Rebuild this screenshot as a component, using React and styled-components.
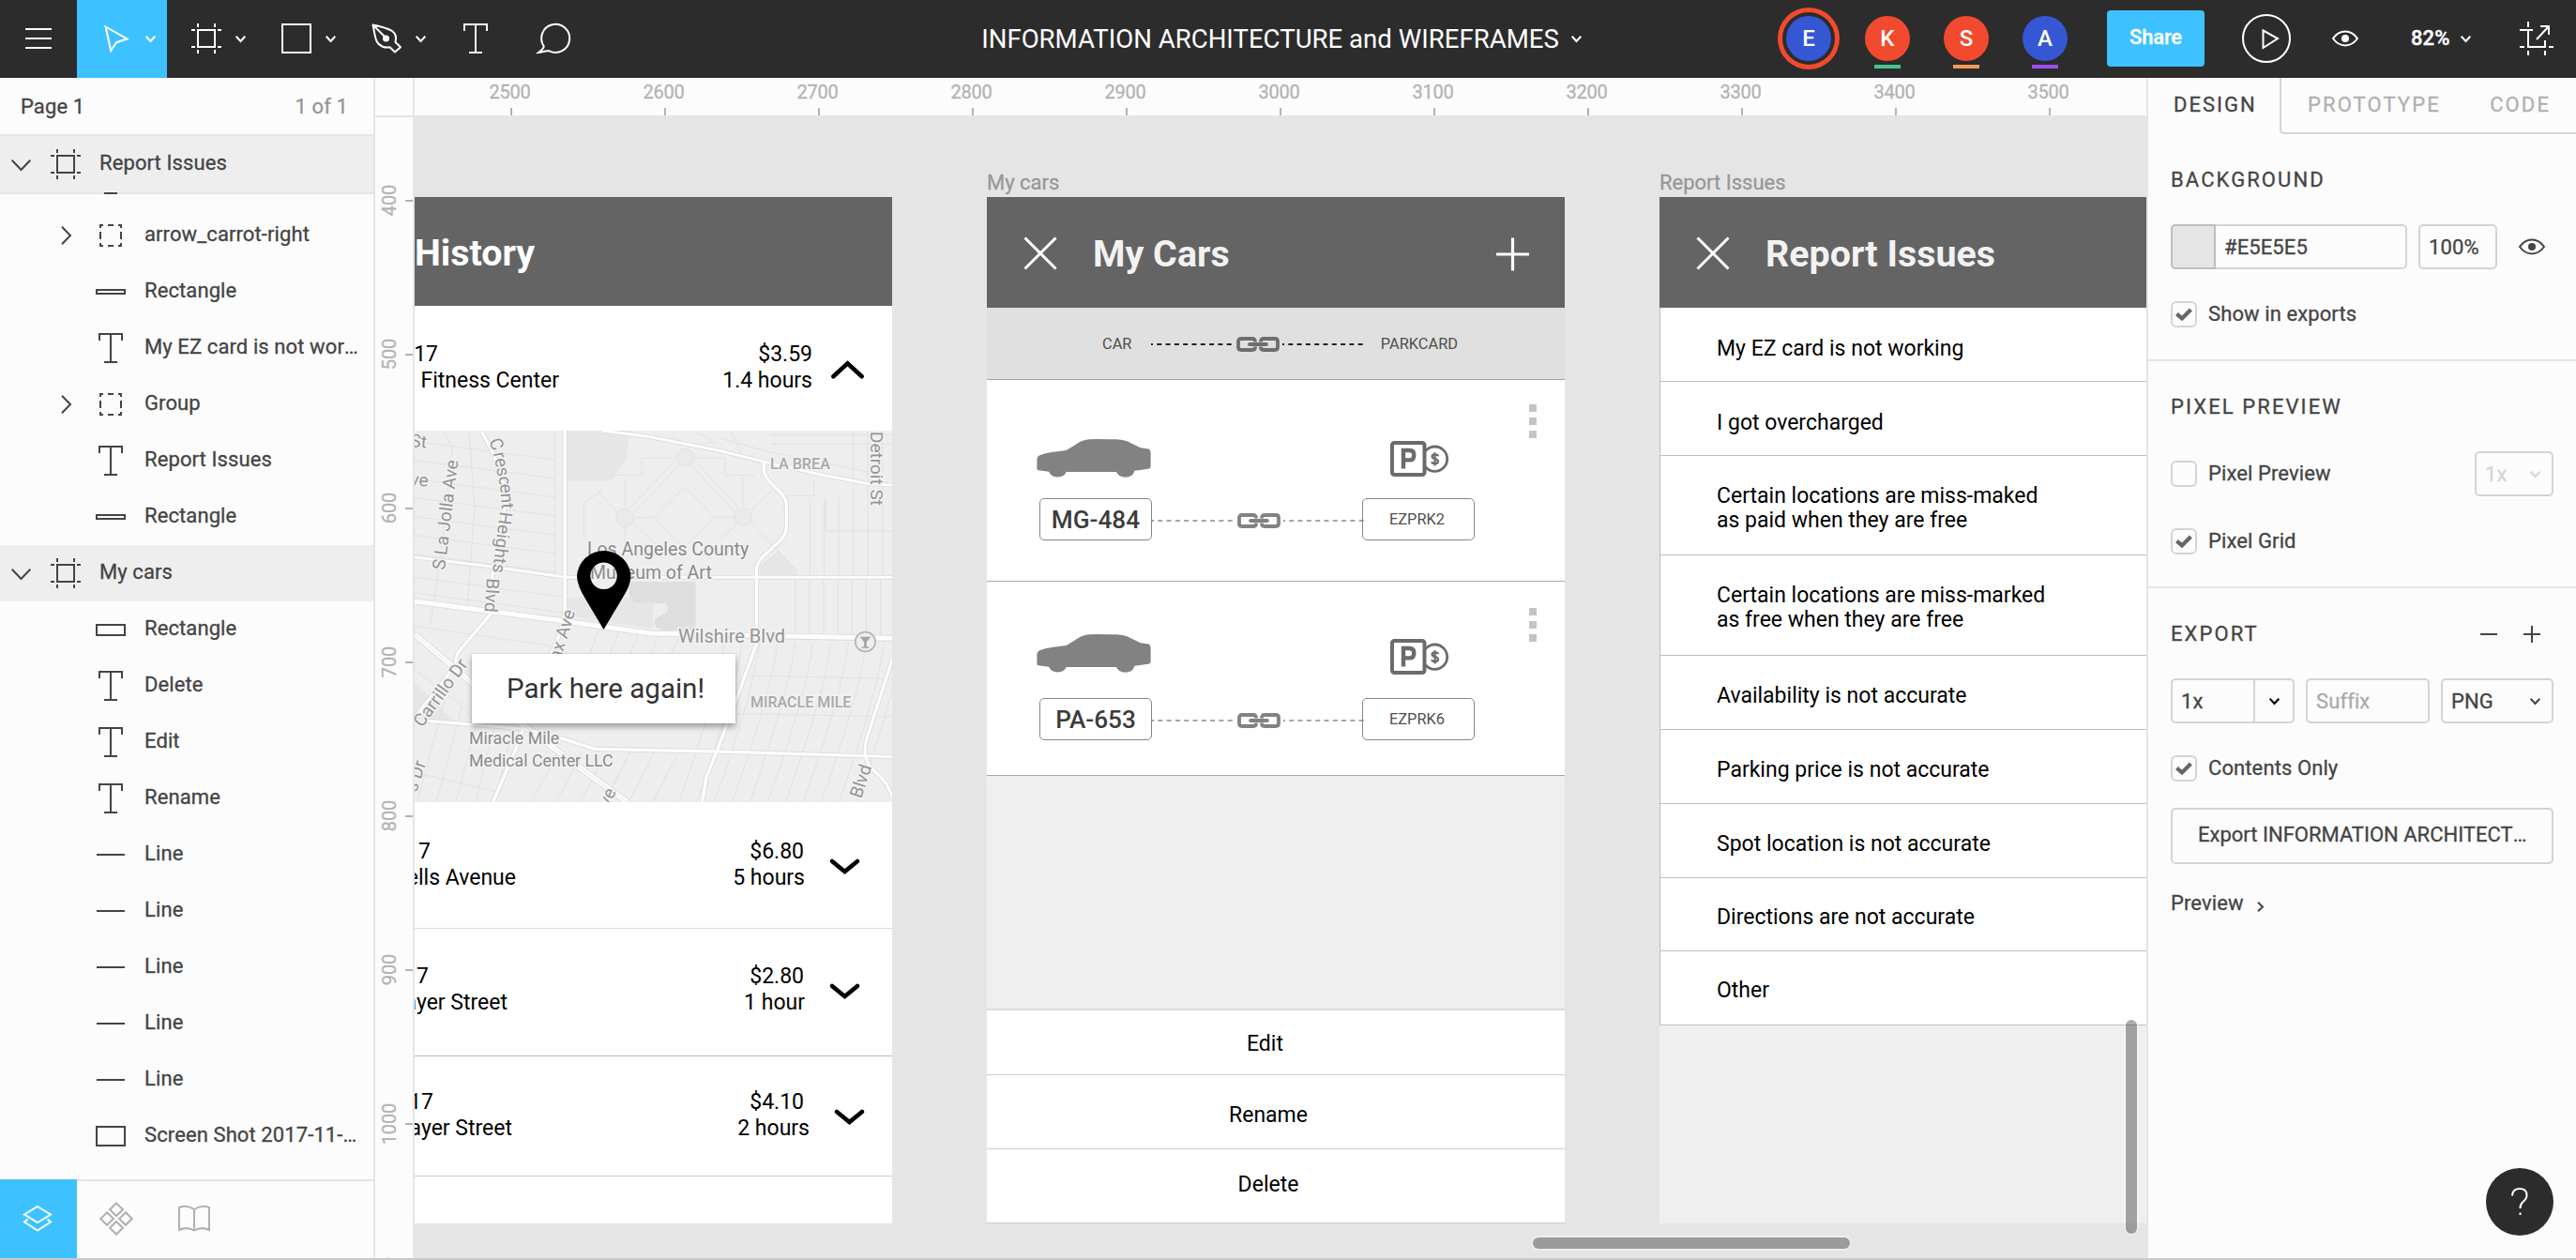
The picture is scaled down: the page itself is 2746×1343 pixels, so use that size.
import React from "react";
import styled, { createGlobalStyle } from "styled-components";

const ink = "#444444";
const line = "#e5e5e5";
const blue = "#3dc2ff";

const Global = createGlobalStyle`
  *, *::before, *::after { box-sizing: border-box; }
  body { margin: 0; font-family: Roboto, "Noto Sans", sans-serif; background: #fcfcfc; }
  svg { display: block; flex: none; overflow: visible; }
`;

const Screen = styled.div`
  width: 2746px;
  height: 1343px;
  display: flex;
  flex-direction: column;
  overflow: hidden;
  color: ${ink};
  font-size: 22px;
  line-height: 24px;
  letter-spacing: 0.1px;
`;
const BottomEdge = styled.div`
  height: 2px;
  flex: none;
  background: #c9c9c9;
`;
const Body = styled.div`
  flex: 1;
  min-height: 0;
  display: flex;
`;

/* ---------- toolbar ---------- */
const Toolbar = styled.header`
  height: 83px;
  flex: none;
  background: #2c2c2c;
  color: #fff;
  display: grid;
  grid-template-columns: 1fr auto 1fr;
`;
const ToolGroup = styled.div`
  display: flex;
`;
const Tool = styled.button`
  width: ${(p) => (p.$single ? 82 : 96)}px;
  height: 83px;
  border: 0;
  padding: ${(p) => (p.$single ? "0 1px 1px 0" : "0 0 1px 26px")};
  background: ${(p) => (p.$active ? blue : "transparent")};
  color: #fff;
  display: flex;
  align-items: center;
  justify-content: ${(p) => (p.$single ? "center" : "flex-start")};
  gap: 15px;
`;
const FileTitle = styled.div`
  display: flex;
  align-items: center;
  gap: 13px;
  padding: 0 14px 0 0;
  font-size: 27.6px;
  letter-spacing: 0;
  white-space: nowrap;
`;
const Actions = styled.div`
  display: flex;
  align-items: center;
  justify-content: flex-end;
  padding: 0 24px 1px 0;
`;
const Avatars = styled.div`
  display: flex;
  gap: 36px;
`;
const Avatar = styled.div`
  position: relative;
  width: 48px;
  height: 48px;
  border-radius: 50%;
  background: ${(p) => p.$color};
  box-shadow: ${(p) => (p.$ring ? `0 0 0 4px #2c2c2c, 0 0 0 9px ${p.$ring}` : "none")};
  display: flex;
  align-items: center;
  justify-content: center;
  font-size: 24px;
  font-weight: 500;
  &::after {
    content: "";
    position: absolute;
    left: 10px;
    bottom: -8px;
    width: 28px;
    height: 4px;
    background: ${(p) => p.$mark || "transparent"};
  }
`;
const Share = styled.button`
  width: 104px;
  height: 60px;
  margin: 0 40px 0 42px;
  padding: 0 0 3px;
  border: 0;
  border-radius: 4px;
  background: ${blue};
  color: #fff;
  font: 500 22px Roboto, sans-serif;
  letter-spacing: -0.2px;
  -webkit-text-stroke: 0.3px;
`;
const Zoom = styled.div`
  width: 64px;
  margin: 0 52px 0 56px;
  display: flex;
  align-items: center;
  justify-content: space-between;
  font-weight: 500;
  font-size: 22px;
  -webkit-text-stroke: 0.4px;
`;
const EyeSlot = styled.div`
  margin-left: 44px;
`;

/* ---------- layers ---------- */
const Sidebar = styled.aside`
  width: 400px;
  flex: none;
  border-right: 2px solid ${line};
  background: #fcfcfc;
  display: flex;
  flex-direction: column;
  -webkit-text-stroke: 0.3px;
`;
const PageBar = styled.div`
  height: 62px;
  flex: none;
  border-bottom: 2px solid ${line};
  padding: 1px 27px 0 22px;
  display: flex;
  align-items: center;
  justify-content: space-between;
`;
const Muted = styled.span`
  color: #969696;
`;
const LayerRow = styled.div`
  height: 60px;
  flex: none;
  padding: 0 12px 3px 0;
  display: grid;
  grid-template-columns: ${(p) => (p.$top ? "54px 32px 1fr" : "102px 32px 1fr")};
  align-items: center;
  background: ${(p) => (p.$top ? "#eeeeee" : "transparent")};
`;
const LayerName = styled.span`
  padding-left: 20px;
  overflow: hidden;
  white-space: nowrap;
  text-overflow: ellipsis;
`;
const Toggle = styled.span`
  padding: ${(p) => (p.$top ? "4px 0 0 12px" : "3px 0 0 65px")};
`;
const LayerIcon = styled.span`
  display: flex;
  justify-content: center;
  padding-top: 3px;
`;
const LayerList = styled.div`
  flex: 1;
  min-height: 0;
  overflow: hidden;
  display: flex;
  flex-direction: column;
`;
const ListRule = styled.div`
  height: 2px;
  flex: none;
  margin-bottom: -46px;
  background: ${line};
`;
const SideTabs = styled.div`
  height: 84px;
  flex: none;
  border-top: 2px solid ${line};
  display: flex;
`;
const SideTab = styled.div`
  width: 82px;
  height: 84px;
  margin-top: -2px;
  padding: ${(p) => p.$pad || 0};
  display: flex;
  align-items: center;
  justify-content: center;
  background: ${(p) => (p.$active ? blue : "transparent")};
  color: ${(p) => (p.$active ? "#fff" : "#b0b0b0")};
`;

/* ---------- canvas ---------- */
const Canvas = styled.main`
  width: 1888px;
  flex: none;
  display: grid;
  grid-template-columns: 42px 1fr;
  grid-template-rows: 40px 1fr;
  overflow: hidden;
  background: #e5e5e5;
`;
const Corner = styled.div`
  background: #fcfcfc;
  border-right: 2px solid ${line};
`;
const TopRuler = styled.div`
  background: #fcfcfc;
  padding-left: 21px;
  display: flex;
  overflow: hidden;
`;
const TopMark = styled.div`
  width: 164px;
  flex: none;
  display: flex;
  flex-direction: column;
  align-items: center;
  justify-content: space-between;
  padding-top: 3px;
  font-size: 20px;
  line-height: 24px;
  letter-spacing: -0.2px;
  color: #b3b3b3;
  -webkit-text-stroke: 0.3px;
  span {
    margin-right: 3px;
  }
  &::after {
    content: "";
    width: 2px;
    height: 8px;
    background: #b3b3b3;
  }
`;
const LeftRuler = styled.div`
  width: 40px;
  background: #fcfcfc;
  border-top: 2px solid ${line};
  padding-top: 7px;
  overflow: hidden;
  min-height: 0;
`;
const LeftMark = styled.div`
  height: 164px;
  display: flex;
  align-items: center;
  justify-content: space-between;
  padding-left: 3px;
  font-size: 20px;
  line-height: 24px;
  letter-spacing: -0.2px;
  color: #b3b3b3;
  -webkit-text-stroke: 0.3px;
  span {
    writing-mode: vertical-rl;
    transform: rotate(180deg);
  }
  &::after {
    content: "";
    width: 8px;
    height: 2px;
    background: #b3b3b3;
  }
`;
const Stage = styled.div`
  position: relative;
  overflow: hidden;
  min-height: 0;
  font-size: 23px;
  line-height: 28px;
  letter-spacing: 0;
  color: #000;
`;
const Artboard = styled.section`
  position: absolute;
  left: ${(p) => p.$x}px;
  top: 55px;
  width: ${(p) => p.$w}px;
`;
const ArtLabel = styled.div`
  height: 32px;
  padding-top: 5px;
  font-size: 22px;
  line-height: 24px;
  color: #979797;
  -webkit-text-stroke: 0.3px;
`;
const ArtBody = styled.div`
  height: 1094px;
  background: ${(p) => p.$bg || "#efefef"};
  display: flex;
  flex-direction: column;
`;
const ArtHeader = styled.div`
  height: ${(p) => p.$h || 118}px;
  flex: none;
  background: #646464;
  padding: 0 38px 0 ${(p) => p.$pad}px;
  display: flex;
  align-items: center;
  color: #f2f2f2;
  font-size: 39.4px;
  line-height: 46px;
  font-weight: 700;
`;
const ArtTitle = styled.div`
  flex: 1;
  padding: 4px 0 0 ${(p) => p.$gap}px;
  color: ${(p) => p.$color || "#f2f2f2"};
  white-space: nowrap;
`;

const Trip = styled.div`
  height: ${(p) => p.$h}px;
  flex: none;
  padding-top: ${(p) => p.$pt}px;
  border-bottom: ${(p) => (p.$rule ? `1px solid ${p.$rule}` : "0")};
  background: #fff;
  display: flex;
`;
const TripColumn = styled.div`
  width: ${(p) => p.$w}px;
  flex: none;
`;
const TripLine = styled.div`
  width: ${(p) => p.$end}px;
  height: 28px;
  display: flex;
  justify-content: flex-end;
  white-space: nowrap;
  span { flex: none; }
`;
const TripArrow = styled.div`
  padding: ${(p) => p.$top}px 0 0 ${(p) => p.$left}px;
`;
const MapBox = styled.div`
  position: relative;
  height: 396px;
  flex: none;
  overflow: hidden;
  background: #eee;
`;
const ParkButton = styled.button`
  position: absolute;
  left: 61px;
  top: 238px;
  width: 281px;
  height: 74px;
  border: 0;
  background: #fff;
  box-shadow: 0 4px 6px rgba(0, 0, 0, 0.32), 0 0 2px rgba(0, 0, 0, 0.15);
  font: 400 29.5px Roboto, sans-serif;
  color: #333;
  padding: 0 0 1px 4px;
`;

const LinkHeader = styled.div`
  height: 77px;
  flex: none;
  background: #e0e0e0;
  border-bottom: 1px solid #a3a3a3;
  padding: 2px 114px 0 123px;
  display: flex;
  align-items: center;
  font-size: 16.4px;
  color: #4f4f4f;
`;
const LinkSpan = styled.div`
  display: flex;
  align-items: center;
  justify-content: space-between;
  width: 227px;
  margin: ${(p) => p.$m || 0};
`;
const CarRow = styled.div`
  height: ${(p) => p.$h}px;
  flex: none;
  background: #fff;
  border-bottom: 1px solid #a9a9a9;
  padding: ${(p) => p.$pt}px 30px 0 53px;
  display: flex;
  justify-content: space-between;
`;
const CarMain = styled.div`
  display: flex;
  flex-direction: column;
  gap: ${(p) => p.$gap}px;
`;
const CarTop = styled.div`
  width: 467px;
  height: 41px;
  display: flex;
  justify-content: space-between;
  padding-right: 27px;
`;
const CardSlot = styled.div`
  padding-top: ${(p) => p.$top}px;
`;
const CarBottom = styled.div`
  padding-left: 3px;
  display: flex;
  align-items: center;
`;
const Plate = styled.div`
  width: 120px;
  height: 45px;
  border: 1.5px solid #868686;
  border-radius: 5px;
  display: flex;
  align-items: center;
  justify-content: center;
  padding-right: ${(p) => (p.$small ? 3 : 0)}px;
  font-size: ${(p) => (p.$small ? 16.4 : 26.2)}px;
  font-weight: ${(p) => (p.$small ? 400 : 500)};
  color: ${(p) => (p.$small ? "#4f4f4f" : "#3c3c3c")};
`;
const Dots = styled.div`
  margin-top: ${(p) => p.$top}px;
  display: flex;
  flex-direction: column;
  gap: 6px;
  i {
    width: 8px;
    height: 8px;
    background: #c4c4c4;
  }
`;
const Filler = styled.div`
  flex: 1;
`;
const MenuRow = styled.div`
  height: ${(p) => p.$h}px;
  flex: none;
  background: #fff;
  border-top: ${(p) => (p.$first ? "2px solid #dcdcdc" : "0")};
  border-bottom: 1px solid #cccccc;
  padding: ${(p) => p.$pad};
  display: flex;
  align-items: center;
  justify-content: center;
`;
const IssueList = styled.div`
  border-left: 1px solid #bdbdbd;
`;
const IssueRow = styled.div`
  height: ${(p) => p.$h}px;
  background: #fff;
  border-bottom: 1px solid #bdbdbd;
  padding: ${(p) => p.$pt}px 0 0 60px;
  line-height: 26.4px;
`;
const ScrollThumb = styled.div`
  position: absolute;
  left: ${(p) => p.$x}px;
  top: ${(p) => p.$y}px;
  width: ${(p) => p.$w}px;
  height: ${(p) => p.$h}px;
  border-radius: 6px;
  background: rgba(0, 0, 0, 0.32);
  box-shadow: 0 0 0 2px rgba(255, 255, 255, 0.3);
`;

/* ---------- properties ---------- */
const Panel = styled.aside`
  width: 458px;
  flex: none;
  min-width: 0;
  border-left: 2px solid ${line};
  background: #fcfcfc;
  position: relative;
  -webkit-text-stroke: 0.3px;
`;
const Tabs = styled.div`
  height: 60px;
  display: flex;
  letter-spacing: 2.1px;
  font-weight: 400;
`;
const ActiveTab = styled.div`
  width: 140px;
  flex: none;
  padding: 17px 0 0 27px;
  letter-spacing: 2px;
  white-space: nowrap;
`;
const OtherTabs = styled.div`
  flex: 1;
  display: flex;
  justify-content: space-between;
  padding: 17px 27px 0 28px;
  border-left: 2px solid #d4d4d4;
  border-bottom: 2px solid #d4d4d4;
  border-bottom-left-radius: 5px;
  color: #b0b0b0;
`;
const Section = styled.section`
  padding: 36px 24px 34px;
  border-bottom: ${(p) => (p.$last ? "0" : `2px solid ${line}`)};
  display: flex;
  flex-direction: column;
  align-items: stretch;
`;
const SectionTitle = styled.div`
  height: 24px;
  margin-bottom: 36px;
  padding-top: 1px;
  display: flex;
  align-items: center;
  letter-spacing: 2.1px;
`;
const Row = styled.div`
  display: flex;
  align-items: center;
  justify-content: ${(p) => (p.$spread ? "space-between" : "flex-start")};
  gap: 12px;
  margin-bottom: ${(p) => p.$mb ?? 34}px;
`;
const Field = styled.div`
  width: ${(p) => p.$w}px;
  flex: none;
  height: 48px;
  border: 2px solid #d4d4d4;
  border-radius: 5px;
  padding: 1px 12px 0 9px;
  display: flex;
  align-items: center;
  justify-content: ${(p) => (p.$spread ? "space-between" : "flex-start")};
  color: ${(p) => p.$color || ink};
`;
const Swatch = styled.div`
  width: 48px;
  height: 48px;
  margin: -1px 9px 0 -11px;
  background: #e5e5e5;
  border: 2px solid #bfbfbf;
  border-radius: 5px 0 0 5px;
`;
const Split = styled.div`
  width: 42px;
  height: 44px;
  margin: -1px -12px 0 auto;
  border-left: 2px solid #d4d4d4;
  color: #000;
  display: flex;
  align-items: center;
  justify-content: center;
`;
const CheckLabel = styled.label`
  display: flex;
  align-items: center;
  gap: 12px;
`;
const Box = styled.span`
  width: 28px;
  height: 28px;
  border: 2px solid #d4d4d4;
  border-radius: 6px;
  display: flex;
  align-items: center;
  justify-content: center;
`;
const ExportButton = styled.button`
  height: 60px;
  margin-bottom: 30px;
  padding: 0 18px 4px 27px;
  border: 2px solid #d4d4d4;
  border-radius: 5px;
  background: transparent;
  color: ${ink};
  font: 400 22px Roboto, sans-serif;
  text-align: left;
  letter-spacing: 0;
  -webkit-text-stroke: 0.3px;
`;
const ButtonText = styled.span`
  display: block;
  overflow: hidden;
  white-space: nowrap;
  text-overflow: ellipsis;
`;
const PreviewLine = styled.div`
  display: flex;
  align-items: center;
  gap: 14px;
  svg { margin-top: 7px; }
`;
const TitleIcons = styled.span`
  margin: 0 14px 0 auto;
  display: flex;
  gap: 28px;
`;
const EyeWrap = styled.span`
  margin-left: 11px;
`;
const Help = styled.button`
  position: absolute;
  right: 24px;
  bottom: 24px;
  width: 72px;
  height: 72px;
  border: 0;
  border-radius: 50%;
  background: #2c2c2c;
  display: flex;
  align-items: center;
  justify-content: center;
`;

/* ---------- icons ---------- */
const Svg = ({ w = 32, h = 32, sw = 2, children, ...rest }) => (
  <svg width={w} height={h} viewBox={`0 0 ${w} ${h}`} fill="none" stroke="currentColor" strokeWidth={sw} {...rest}>
    {children}
  </svg>
);
const Chevron = ({ w = 11, h = 7, sw = 2 }) => (
  <Svg w={w} h={h} sw={sw}>
    <path d={`M.7 .8 L${w / 2} ${h - 1} L${w - 0.7} .8`} />
  </Svg>
);
const FrameIcon = () => (
  <Svg>
    <rect x="7" y="7" width="18" height="18" />
    <path d="M0 7h4M28 7h4M0 25h4M28 25h4M7 0v4M25 0v4M7 28v4M25 28v4" />
  </Svg>
);
const TextIcon = () => (
  <Svg w={26}>
    <path d="M1 8V1h24v7M13 1v30M6 31h14" />
  </Svg>
);
const GroupIcon = () => (
  <Svg w={24} h={24}>
    <path d="M1 4V1h3M20 1h3v3M23 20v3h-3M4 23H1v-3M9 1h6M9 23h6M1 8v8M23 8v8" />
  </Svg>
);
const BoxIcon = ({ h }) => (
  <Svg h={h}>
    <rect x="1" y="1" width="30" height={h - 2} />
  </Svg>
);
const LineIcon = () => (
  <Svg w={30} h={2}>
    <path d="M0 1h30" />
  </Svg>
);
const EyeIcon = ({ h = 16 }) => (
  <Svg w={28} h={h}>
    <path d={`M1 ${h / 2}C8 ${-h * 0.12} 20 ${-h * 0.12} 27 ${h / 2}C20 ${h * 1.12} 8 ${h * 1.12} 1 ${h / 2}Z`} />
    <circle cx="14" cy={h / 2} r="4" fill="currentColor" stroke="none" />
  </Svg>
);
const CheckIcon = () => (
  <Svg w={18} h={14} sw={4.2} style={{ color: "#666" }}>
    <path d="M1.4 6.6 7 11.4 16.4 2" />
  </Svg>
);
const CloseIcon = () => (
  <Svg w={34} h={34} sw={3} style={{ color: "#fff" }}>
    <path d="M.5 1.5 33.5 34.5M33.5 1.5 .5 34.5" />
  </Svg>
);
const TripChevron = ({ up }) => (
  <Svg w={up ? 35 : 31} h={up ? 20 : 16} sw={4.6} strokeLinecap="round" strokeLinejoin="miter">
    <path d={up ? "M2.3 17.2 17.5 3.3 32.7 17.2" : "M2 2 15.5 13 29 2"} />
  </Svg>
);
const Chain = ({ color }) => (
  <Svg w={46} h={16} sw={3.8} style={{ color }}>
    <path d="M20 5.5V5Q20 2 17 2H5Q2 2 2 5V11Q2 14 5 14H17Q20 14 20 11V10.5" />
    <path d="M26 5.5V5Q26 2 29 2H41Q44 2 44 5V11Q44 14 41 14H29Q26 14 26 11V10.5" />
    <path d="M14 8H32" strokeLinecap="round" />
  </Svg>
);
const Dashes = ({ color, sw }) => (
  <Svg w={87} h={2} sw={sw} style={{ color }}>
    <path d="M0 1H87" strokeDasharray="5 4.3" strokeDashoffset="3" />
  </Svg>
);
const Linker = ({ m, color = "#888", chain = "#828282", sw = 1.4 }) => (
  <LinkSpan $m={m}>
    <Dashes color={color} sw={sw} />
    <Chain color={chain} />
    <Dashes color={color} sw={sw} />
  </LinkSpan>
);
const Car = () => (
  <svg width="122" height="41" viewBox="0 0 122 41" fill="#828282">
    <path d="M.4 32V22Q.6 18 4 17Q9 14.8 16 14L31.6 12.1L43 5Q49 .6 56 .2Q62 -.2 85 .3Q92 .6 97 2.5L110.7 9.3L119.5 10.6Q121.2 11.2 121.6 14.3V29.5Q121.4 31.3 119 31.7L104.5 33.8Q102.5 40.8 94.7 40.8Q87.5 40.8 85 35.1H31.6Q30 40.4 22.3 40.4Q15.5 40.4 13 34.8L2 33.2Q.5 33 .4 32Z" />
  </svg>
);
const ParkCard = () => (
  <svg width="63" height="38" viewBox="0 0 63 38" fill="none" stroke="#6b6b6b">
    <circle cx="47.5" cy="19.2" r="13.2" strokeWidth="2.8" />
    <rect x="2" y="2" width="34.5" height="34" rx="2.5" strokeWidth="4" fill="#fff" />
    <path d="M14 29.5V10H20.5Q25.3 10 25.3 15.2Q25.3 20.4 20.5 20.4H14" strokeWidth="4.4" />
    <path d="M51 16.2Q50.6 14.4 47.6 14.4Q44.6 14.4 44.6 16.6Q44.6 18.4 47.6 19Q51 19.6 51 22Q51 24.2 47.6 24.2Q44.5 24.2 44.2 22.2M47.6 12.2V26.4" strokeWidth="2.2" />
  </svg>
);

/* ---------- map ---------- */
const minor = (() => {
  const out = [];
  for (let i = 0; i < 7; i++) out.push(`M62 ${92 + i * 60}L497 ${150 + i * 60}`);
  out.push("M62 525L528 590", "M62 575L528 640", "M62 682L480 745");
  out.push("M150 57L178 110L150 400L110 680", "M230 57L248 300L225 620", "M497 57V520");
  for (let i = 0; i < 7; i++) out.push(`M${1240 + i * 44} 526V712`);
  for (let i = 0; i < 6; i++) out.push(`M${1285 + i * 45} ${i > 2 ? 57 : 270}V526`);
  for (let i = 0; i < 11; i++) out.push(`M${1020 + i * 55} 735Q${1000 + i * 55} 900 ${880 + i * 55} 1244`);
  for (let i = 0; i < 5; i++) out.push(`M${880 - i * 62} ${720 - i * 6}L${840 - i * 62} 800`);
  for (let i = 0; i < 6; i++) out.push(`M${880 - i * 75} 1085L${800 - i * 75} 1244`);
  for (let i = 0; i < 5; i++) out.push(`M${160 + i * 52} ${900 + i * 25}L${70 + i * 60} 1244`);
  out.push("M1080 840L1540 850", "M1060 962L1540 972", "M62 1150L330 1215", "M62 820L200 930L260 1000");
  out.push("M1000 80L1160 125L1470 190", "M1165 70H1540M1165 100H1540M1040 57L1080 150M1335 276V378H1540M1213 265H1298V212");
  return out.join("");
})();
const park =
  "M765 145H870M930 145H1022V200H1110V205M765 145V200H670M897 238L990 333L897 430L803 335ZM713 300V210M1078 300V205M640 250L585 290V390L610 415M625 248L690 318M1102 350L1245 505M1165 250L1102 312M745 315L880 168M732 300L868 155M920 168L1050 315M932 158L1064 302M742 358L850 460M1055 360L960 450M745 335H803M990 333H1050M713 363V430M860 75Q900 110 985 95Q960 70 930 65";
const roads = [
  ["M62 603L500 662L790 705L1100 712L1540 721", 15],
  ["M62 462L300 492L528 526H1540", 9],
  ["M640 57L780 75L1000 120L1150 158L1330 200L1470 227L1540 231", 9],
  ["M527 57V620Q525 690 480 780L375 1075L305 1244", 10],
  ["M1143 155V190Q1148 212 1190 250Q1213 272 1213 300V365Q1213 390 1190 412L1140 460Q1122 478 1120 500V740L1060 910L1000 1075L965 1165L952 1244", 10],
  ["M268 57L305 130L345 250L330 400L302 520L300 640L205 755Q188 775 190 800L150 860L62 975", 10],
  ["M62 708L240 865L400 1000L560 1125L720 1244", 16],
  ["M100 985L400 1010L520 1042L620 1075L1000 1083L1540 1100", 10],
  ["M1540 790L1465 1030Q1445 1090 1470 1130L1500 1160Q1530 1190 1540 1230", 9],
];
const MapLabel = ({ x, y, r = 0, s = 19, w = 400, c = "#949494", children }) => (
  <text
    transform={`translate(${x} ${y}) rotate(${r})`}
    fontFamily="Roboto, sans-serif"
    fontSize={s}
    fontWeight={w}
    fill={c}
    stroke="#f2f2f2"
    strokeWidth="3"
    paintOrder="stroke"
    letterSpacing="0"
  >
    {children}
  </text>
);
const StreetMap = () => (
  <svg width="509" height="396" viewBox="0 0 509 396">
    <g transform="scale(0.34439 0.33333) translate(-62 -57)" fill="none" strokeLinejoin="round">
      <path d="M535 57H730L715 150L670 218H535ZM535 590H800V690L535 650ZM1130 490L1190 440L1245 505V520H1130ZM62 860L190 990L62 980Z" fill="#e6e6e6" />
      <path d="M725 540H932V695H830Q800 690 805 660L845 635Q850 600 820 610L745 605Q725 595 725 570Z" fill="#dedede" />
      <path d={minor} stroke="#dedede" strokeWidth="2.4" />
      <path d={park} stroke="#dfdfdf" strokeWidth="2.6" />
      <g fill="#eaeaea" stroke="#dfdfdf" strokeWidth="2.6">
        <circle cx="900" cy="143" r="28" />
        <circle cx="713" cy="335" r="28" />
        <circle cx="1078" cy="333" r="28" />
      </g>
      {roads.map(([d, w]) => (
        <path key={d} d={d} stroke="#dadada" strokeWidth={w + 5} />
      ))}
      {roads.map(([d, w]) => (
        <path key={d} d={d} stroke="#fdfdfd" strokeWidth={w} />
      ))}
      <path d="M62 708L240 865L400 1000L560 1125L720 1244" stroke="#e2e2e2" strokeWidth="2.5" />
      <circle cx="1457" cy="732" r="31" fill="#eee" stroke="#b5b5b5" strokeWidth="5" />
      <path d="M1440 716H1474L1461 733V748H1468V752H1446V748H1453V733Z" fill="#a5a5a5" />
    </g>
    <MapLabel x={-5} y={17} r={5}>St</MapLabel>
    <MapLabel x={-5} y={58} r={5}>ve</MapLabel>
    <MapLabel x={32} y={149} r={-83}>S La Jolla Ave</MapLabel>
    <MapLabel x={67} y={-6} r={56}>s</MapLabel>
    <MapLabel x={79} y={11} r={68}>C</MapLabel>
    <MapLabel x={84} y={24} r={79}>resc</MapLabel>
    <MapLabel x={91} y={57} r={86}>ent</MapLabel>
    <MapLabel x={91} y={86} r={97}>Heights</MapLabel>
    <MapLabel x={77} y={157} r={94}>Blvd</MapLabel>
    <MapLabel x={379} y={41} s={16.2} w={500} c="#a8a8a8">LA BREA</MapLabel>
    <MapLabel x={486} y={1} r={90}>Detroit St</MapLabel>
    <MapLabel x={184} y={133} c="#8a8a8a" s={19.5}>Los Angeles County</MapLabel>
    <MapLabel x={187} y={158} c="#8a8a8a" s={19.5}>Museum of Art</MapLabel>
    <MapLabel x={281} y={226} s={20}>Wilshire Blvd</MapLabel>
    <MapLabel x={155} y={246} r={-73}>ax Ave</MapLabel>
    <MapLabel x={8} y={317} r={-54}>Carrillo Dr</MapLabel>
    <MapLabel x={358} y={295} s={16} w={500} c="#a8a8a8">MIRACLE MILE</MapLabel>
    <MapLabel x={58} y={334} s={17.8} c="#8a8a8a">Miracle Mile</MapLabel>
    <MapLabel x={58} y={358} s={17.8} c="#8a8a8a">Medical Center LLC</MapLabel>
    <MapLabel x={2} y={386} r={-72}>s Dr</MapLabel>
    <MapLabel x={207} y={402} r={-65}>ve</MapLabel>
    <MapLabel x={473} y={402} r={-72}>· Blvd</MapLabel>
    <path
      fillRule="evenodd"
      d="M201.500 212L183 181Q173 165 173 155A28.800 28.800 0 0 1 230.500 155Q230.500 165 220 181ZM201.500 140.500A14.300 14.300 0 1 0 201.600 140.500Z"
      fill="#000"
    />
  </svg>
);

/* ---------- data ---------- */
const layers = [
  { icon: <TextIcon />, name: "" },
  { icon: <GroupIcon />, name: "arrow_carrot-right", open: true },
  { icon: <BoxIcon h={6} />, name: "Rectangle" },
  { icon: <TextIcon />, name: "My EZ card is not working" },
  { icon: <GroupIcon />, name: "Group", open: true },
  { icon: <TextIcon />, name: "Report Issues" },
  { icon: <BoxIcon h={6} />, name: "Rectangle" },
  { icon: <FrameIcon />, name: "My cars", top: true },
  { icon: <BoxIcon h={13} />, name: "Rectangle" },
  { icon: <TextIcon />, name: "Delete" },
  { icon: <TextIcon />, name: "Edit" },
  { icon: <TextIcon />, name: "Rename" },
  { icon: <LineIcon />, name: "Line" },
  { icon: <LineIcon />, name: "Line" },
  { icon: <LineIcon />, name: "Line" },
  { icon: <LineIcon />, name: "Line" },
  { icon: <LineIcon />, name: "Line" },
  { icon: <BoxIcon h={22} />, name: "Screen Shot 2017-11-29" },
];
const trips = [
  { h: 135, pt: 39, rule: "#dcdcdc", date: ["7", 17], place: ["ells Avenue", 108], cost: ["$6.80", 415], time: ["5 hours", 416], arrow: [27, 22] },
  { h: 136, pt: 37, rule: "#b8b8b8", date: ["7", 15], place: ["ayer Street", 99], cost: ["$2.80", 415], time: ["1 hour", 416], arrow: [27, 22] },
  { h: 128, pt: 35, rule: "#cccccc", date: ["17", 20], place: ["ayer Street", 104], cost: ["$4.10", 415], time: ["2 hours", 421], arrow: [32, 22] },
];
const issues = [
  [79, 31, ["My EZ card is not working"]],
  [79, 31, ["I got overcharged"]],
  [106, 30, ["Certain locations are miss-maked", "as paid when they are free"]],
  [107, 30, ["Certain locations are miss-marked", "as free when they are free"]],
  [79, 30, ["Availability is not accurate"]],
  [79, 30, ["Parking price is not accurate"]],
  [79, 30, ["Spot location is not accurate"]],
  [78, 29, ["Directions are not accurate"]],
  [79, 29, ["Other"]],
];

const Layer = ({ icon, name, open, top }) => (
  <LayerRow $top={top}>
    <Toggle $top={top}>
      {top && <Chevron w={21} h={12} sw={2} />}
      {open && (
        <Svg w={11} h={20}>
          <path d="M1 .8 10 10 1 19.200" />
        </Svg>
      )}
    </Toggle>
    <LayerIcon>{icon}</LayerIcon>
    <LayerName>{name}</LayerName>
  </LayerRow>
);

const TripRow = ({ t, up }) => (
  <Trip $h={t.h} $pt={t.pt} $rule={t.rule}>
    <TripColumn $w={0}>
      <TripLine $end={t.date[1]}><span>{t.date[0]}</span></TripLine>
      <TripLine $end={t.place[1]}><span>{t.place[0]}</span></TripLine>
    </TripColumn>
    <TripColumn $w={416}>
      <TripLine $end={t.cost[1]}><span>{t.cost[0]}</span></TripLine>
      <TripLine $end={t.time[1]}><span>{t.time[0]}</span></TripLine>
    </TripColumn>
    <TripArrow $left={t.arrow[0]} $top={t.arrow[1]}>
      <TripChevron up={up} />
    </TripArrow>
  </Trip>
);

const CarCard = ({ h, pt, gap, dots, drop, plate, card }) => (
  <CarRow $h={h} $pt={pt}>
    <CarMain $gap={gap}>
      <CarTop>
        <Car />
        <CardSlot $top={drop}>
          <ParkCard />
        </CardSlot>
      </CarTop>
      <CarBottom>
        <Plate>{plate}</Plate>
        <Linker m="3px -3px 0 0" />
        <Plate $small>{card}</Plate>
      </CarBottom>
    </CarMain>
    <Dots $top={dots}>
      <i />
      <i />
      <i />
    </Dots>
  </CarRow>
);

const Check = ({ on, children }) => (
  <CheckLabel>
    <Box>{on && <CheckIcon />}</Box>
    {children}
  </CheckLabel>
);

export default function App() {
  return (
    <Screen>
      <Global />
      <Toolbar>
        <ToolGroup>
          <Tool $single>
            <Svg w={28} h={22}>
              <path d="M0 1h28M0 11h28M0 21h28" />
            </Svg>
          </Tool>
          <Tool $active>
            <Svg>
              <path d="M4.600 3.500 27.500 16.500 16.200 20.200 10.200 29Z" strokeLinejoin="miter" />
            </Svg>
            <Chevron />
          </Tool>
          <Tool>
            <FrameIcon />
            <Chevron />
          </Tool>
          <Tool>
            <Svg>
              <rect x="1" y="1" width="30" height="30" />
            </Svg>
            <Chevron />
          </Tool>
          <Tool>
            <Svg>
              <path d="M1.500 1.500C9 3 17 5 22 8C26 11 27 15 25.500 20L31 25.200L25 30.500L19.500 25.300C14 26.500 8 24 5.500 19C3.500 14 2.800 8 1.500 1.500ZM1.500 1.500L15.500 15.500" strokeLinejoin="round" />
              <circle cx="15.500" cy="16" r="3.500" fill="currentColor" stroke="none" />
            </Svg>
            <Chevron />
          </Tool>
          <Tool $single>
            <TextIcon />
          </Tool>
          <Tool $single>
            <Svg w={36}>
              <path transform="translate(1.500 0)" d="M7.200 24.200A15 15 0 1 1 13 29.300C9 28.500 6 30.800 1.500 31C5 28.500 7.500 26.500 7.200 24.200Z" />
            </Svg>
          </Tool>
        </ToolGroup>
        <FileTitle>
          INFORMATION ARCHITECTURE and WIREFRAMES
          <Chevron />
        </FileTitle>
        <Actions>
          <Avatars>
            <Avatar $color="#3657d4" $ring="#f24a2e">E</Avatar>
            <Avatar $color="#f24a2e" $mark="#45c491">K</Avatar>
            <Avatar $color="#f24a2e" $mark="#f49a55">S</Avatar>
            <Avatar $color="#3657d4" $mark="#9b4ff0">A</Avatar>
          </Avatars>
          <Share>Share</Share>
          <Svg w={52} h={52}>
            <circle cx="26" cy="26" r="25" />
            <path d="M22.500 17.500 38 26 22.500 36Z" />
          </Svg>
          <EyeSlot>
            <EyeIcon />
          </EyeSlot>
          <Zoom>
            82%
            <Chevron />
          </Zoom>
          <Svg w={36} h={36}>
            <path d="M9 0v6M0 9h14M9 9v18h18V20M0 27h5M31 27h5M9 31v5M27 31v5M18 19 31 5M22 5h9v9" />
          </Svg>
        </Actions>
      </Toolbar>

      <Body>
        <Sidebar>
          <PageBar>
            <span>Page 1</span>
            <Muted>1 of 1</Muted>
          </PageBar>
          <Layer icon={<FrameIcon />} name="Report Issues" top />
          <LayerList>
            <ListRule />
            {layers.map((l, i) => (
              <Layer key={i} {...l} />
            ))}
          </LayerList>
          <SideTabs>
            <SideTab $active $pad="0 2px 0 0">
              <Svg w={30} h={28}>
                <path d="M15 1 29 9.500 15 18 1 9.500ZM4.500 14.500 1 17.500 15 26.500 29 17.500 25.500 14.500" />
              </Svg>
            </SideTab>
            <SideTab $pad="0 0 0 1px">
              <Svg w={36} h={36}>
                <path d="M18 1.500 25 8.300 18 15 11 8.300ZM8 11.300 15 18 8 24.800 1.200 18ZM28 11.300 34.800 18 28 24.800 21 18ZM18 21 25 27.800 18 34.500 11 27.800Z" />
              </Svg>
            </SideTab>
            <SideTab $pad="0 0 0 4px">
              <Svg w={34} h={28}>
                <path d="M17 4Q9 -1.500 1 2V26Q9 22 17 26.500Q25 22 33 26V2Q25 -1.500 17 4ZM17 4V26" />
              </Svg>
            </SideTab>
          </SideTabs>
        </Sidebar>

        <Canvas>
          <Corner />
          <TopRuler>
            {[2500, 2600, 2700, 2800, 2900, 3000, 3100, 3200, 3300, 3400, 3500].map((n) => (
              <TopMark key={n}>
                <span>{n}</span>
              </TopMark>
            ))}
          </TopRuler>
          <LeftRuler>
            {[400, 500, 600, 700, 800, 900, 1000, 1100].map((n) => (
              <LeftMark key={n}>
                <span>{n}</span>
              </LeftMark>
            ))}
          </LeftRuler>
          <Stage>
            <Artboard $x={0} $w={509}>
              <ArtLabel />
              <ArtBody $bg="#fff">
                <ArtHeader $pad={0} $h={116}>
                  <ArtTitle $gap={0} $color="#fff">History</ArtTitle>
                </ArtHeader>
                <TripRow
                  up
                  t={{ h: 133, pt: 38, date: ["17", 25], place: ["Fitness Center", 154], cost: ["$3.59", 424], time: ["1.4 hours", 424], arrow: [28, 20] }}
                />
                <MapBox>
                  <StreetMap />
                  <ParkButton>Park here again!</ParkButton>
                </MapBox>
                {trips.map((t) => (
                  <TripRow key={t.cost[0]} t={t} />
                ))}
              </ArtBody>
            </Artboard>

            <Artboard $x={610} $w={616}>
              <ArtLabel>My cars</ArtLabel>
              <ArtBody>
                <ArtHeader $pad={40}>
                  <CloseIcon />
                  <ArtTitle $gap={39}>My Cars</ArtTitle>
                  <Svg w={35} h={35} sw={3.2} style={{ color: "#fff" }}>
                    <path d="M0 19h35M17.500 1.500v35" />
                  </Svg>
                </ArtHeader>
                <LinkHeader>
                  CAR
                  <Linker m="0 18px 0 21px" color="#222" chain="#6e6e6e" sw={2} />
                  PARKCARD
                </LinkHeader>
                <CarCard h={215} pt={63} gap={22} dots={-37} drop={1.5} plate="MG-484" card="EZPRK2" />
                <CarCard h={207} pt={56} gap={27} dots={-28} drop={5} plate="PA-653" card="EZPRK6" />
                <Filler />
                <MenuRow $first $h={71} $pad="4px 23px 0 0">Edit</MenuRow>
                <MenuRow $h={79} $pad="7px 16px 0 0">Rename</MenuRow>
                <MenuRow $h={79} $pad="0 16px 2px 0">Delete</MenuRow>
              </ArtBody>
            </Artboard>

            <Artboard $x={1327} $w={616}>
              <ArtLabel>Report Issues</ArtLabel>
              <ArtBody>
                <ArtHeader $pad={40}>
                  <CloseIcon />
                  <ArtTitle $gap={39}>Report Issues</ArtTitle>
                </ArtHeader>
                <IssueList>
                  {issues.map(([h, pt, lines]) => (
                    <IssueRow key={lines[0]} $h={h} $pt={pt}>
                      {lines.map((l) => (
                        <div key={l}>{l}</div>
                      ))}
                    </IssueRow>
                  ))}
                </IssueList>
              </ArtBody>
            </Artboard>

            <ScrollThumb $x={1192} $y={1196} $w={338} $h={12} />
            <ScrollThumb $x={1824} $y={964} $w={12} $h={228} />
          </Stage>
        </Canvas>

        <Panel>
          <Tabs>
            <ActiveTab>DESIGN</ActiveTab>
            <OtherTabs>
              <span>PROTOTYPE</span>
              <span>CODE</span>
            </OtherTabs>
          </Tabs>
          <Section>
            <SectionTitle>BACKGROUND</SectionTitle>
            <Row>
              <Field $w={252}>
                <Swatch />
                #E5E5E5
              </Field>
              <Field $w={84}>100%</Field>
              <EyeWrap>
                <EyeIcon />
              </EyeWrap>
            </Row>
            <Row $mb={0}>
              <Check on>Show in exports</Check>
            </Row>
          </Section>
          <Section>
            <SectionTitle>PIXEL PREVIEW</SectionTitle>
            <Row $spread>
              <Check>Pixel Preview</Check>
              <Field $w={84} $spread $color="#d4d4d4">
                1x
                <Chevron />
              </Field>
            </Row>
            <Row $mb={0}>
              <Check on>Pixel Grid</Check>
            </Row>
          </Section>
          <Section $last>
            <SectionTitle>
              EXPORT
              <TitleIcons>
                <Svg w={18} h={18}>
                  <path d="M0 9h18" />
                </Svg>
                <Svg w={18} h={18}>
                  <path d="M0 9h18M9 0v18" />
                </Svg>
              </TitleIcons>
            </SectionTitle>
            <Row>
              <Field $w={132}>
                1x
                <Split>
                  <Chevron />
                </Split>
              </Field>
              <Field $w={132} $color="#aaaaaa">Suffix</Field>
              <Field $w={120} $spread>
                PNG
                <Chevron />
              </Field>
            </Row>
            <Row $mb={28}>
              <Check on>Contents Only</Check>
            </Row>
            <ExportButton>
              <ButtonText>Export INFORMATION ARCHITECTURE and WIREFRAMES</ButtonText>
            </ExportButton>
            <PreviewLine>
              Preview
              <Svg w={7} h={11}>
                <path d="M1 .8 6 5.500 1 10.200" />
              </Svg>
            </PreviewLine>
          </Section>
          <Help>
            <Svg w={18} h={30} style={{ color: "#fff" }}>
              <path d="M1 8.500Q1.500 1 9 1Q16.500 1 16.500 8Q16.500 12 12.500 15Q9.500 17.500 9.500 22M9.500 26.500V29" />
            </Svg>
          </Help>
        </Panel>
      </Body>
      <BottomEdge />
    </Screen>
  );
}
